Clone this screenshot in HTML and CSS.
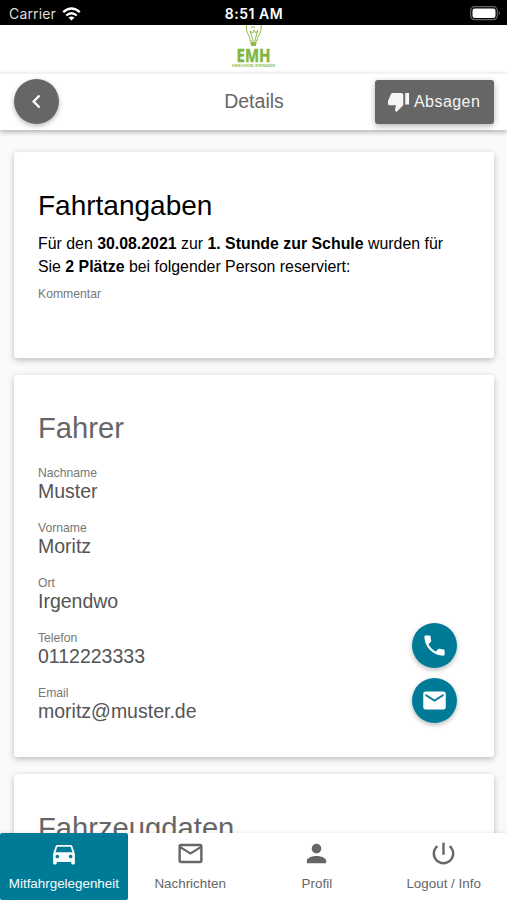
FILE: index.html
```html
<!DOCTYPE html>
<html lang="de">
<head>
<meta charset="utf-8">
<meta name="viewport" content="width=device-width, initial-scale=1">
<title>Details</title>
<link rel="stylesheet" href="styles.css">
</head>
<body>
<div class="app">
  <div class="status">
    <div class="carrier"><span>Carrier</span>
      <svg width="19" height="14" viewBox="0 0 19 14" fill="none" stroke="#fff" stroke-width="2.3"><path class="line" d="M1.2 5.2Q9.5-2.2 17.8 5.2M4.2 8.5Q9.5 3.9 14.8 8.5"/><path d="M9.5 13.6L6.5 10.6Q9.5 8.2 12.5 10.6Z" fill="#fff" stroke="none"/></svg>
    </div>
    <div class="clock">8:51 AM</div>
    <svg class="battery" width="31" height="15" viewBox="0 0 31 15"><rect x=".7" y=".7" width="26.6" height="13" rx="4" fill="#000" stroke="#666" stroke-width="1.2"/><rect x="2.5" y="2.4" width="23" height="9.6" rx="2.3" fill="#fff"/><path d="M28.8 5Q31 7.2 28.8 9.4Z" fill="#777"/></svg>
  </div>
  <div class="brand">
    <svg width="46" height="48" viewBox="0 0 46 48">
      <g class="line" stroke="#8fbd4c" stroke-width="1"><path d="M15.5 0C15 4 16 8 18 11Q19 13 19 16H26Q26 13 27.5 11C30 7 30.5 4 30 0M22 15L19 6L22 8L23 5L25 8L27 5L24 15M20 3Q22 0 24 3"/><path d="M19.5 18H25.5M20 20H25" stroke-width="2"/></g>
      <text x="5.5" y="36.8" textLength="34" lengthAdjust="spacingAndGlyphs" class="brand-name">EMH</text>
      <text x="1" y="42.3" textLength="43" lengthAdjust="spacingAndGlyphs" class="brand-sub">EINFACH MOBIL MITEINANDER</text>
    </svg>
  </div>
  <header class="bar">
    <button class="round back" aria-label="Zurück"><svg width="27" height="27" viewBox="0 0 24 24"><path d="M15.41,16.58L10.83,12L15.41,7.41L14,6L8,12L14,18L15.41,16.58Z"/></svg></button>
    <h1>Details</h1>
    <button class="cancel"><svg width="23" height="23" viewBox="0 0 24 24"><path d="M19,15H23V3H19M15,3H6C5.17,3 4.46,3.5 4.16,4.22L1.14,11.27C1.05,11.5 1,11.74 1,12V14A2,2 0 0,0 3,16H9.31L8.36,20.57C8.34,20.67 8.33,20.77 8.33,20.88C8.33,21.3 8.5,21.67 8.77,21.94L9.83,23L16.41,16.41C16.78,16.05 17,15.55 17,15V5C17,3.89 16.1,3 15,3Z"/></svg><span>Absagen</span></button>
  </header>
  <main>
    <section class="card ride">
      <h2>Fahrtangaben</h2>
      <p>Für den <b>30.08.2021</b> zur <b>1. Stunde zur Schule</b> wurden für<br>Sie <b>2 Plätze</b> bei folgender Person reserviert:</p>
      <div class="label">Kommentar</div>
    </section>
    <section class="card driver">
      <h2>Fahrer</h2>
      <div class="field"><div><div class="label">Nachname</div><div class="value">Muster</div></div></div>
      <div class="field"><div><div class="label">Vorname</div><div class="value">Moritz</div></div></div>
      <div class="field"><div><div class="label">Ort</div><div class="value">Irgendwo</div></div></div>
      <div class="field"><div><div class="label">Telefon</div><div class="value">0112223333</div></div>
        <button class="round action" aria-label="Anrufen"><svg width="27" height="27" viewBox="0 0 24 24"><path d="M6.62,10.79C8.06,13.62 10.38,15.94 13.21,17.38L15.41,15.18C15.69,14.9 16.08,14.82 16.43,14.93C17.55,15.3 18.75,15.5 20,15.5A1,1 0 0,1 21,16.5V20A1,1 0 0,1 20,21A17,17 0 0,1 3,4A1,1 0 0,1 4,3H7.5A1,1 0 0,1 8.5,4C8.5,5.25 8.7,6.45 9.07,7.57C9.18,7.92 9.1,8.31 8.82,8.59L6.62,10.79Z"/></svg></button></div>
      <div class="field"><div><div class="label">Email</div><div class="value">moritz@muster.de</div></div>
        <button class="round action" aria-label="E-Mail"><svg width="27" height="27" viewBox="0 0 24 24"><path d="M20,8L12,13L4,8V6L12,11L20,6M20,4H4C2.89,4 2,4.89 2,6V18A2,2 0 0,0 4,20H20A2,2 0 0,0 22,18V6C22,4.89 21.1,4 20,4Z"/></svg></button></div>
    </section>
    <section class="card vehicle"><h2>Fahrzeugdaten</h2></section>
  </main>
  <nav>
    <a class="tab active"><svg width="30" height="29" viewBox="0 0 24 24"><path d="M18.92 6.01C18.72 5.42 18.16 5 17.5 5h-11c-.66 0-1.21.42-1.42 1.01L3 12v8c0 .55.45 1 1 1h1c.55 0 1-.45 1-1v-1h12v1c0 .55.45 1 1 1h1c.55 0 1-.45 1-1v-8l-2.08-5.99zM6.5 16c-.83 0-1.5-.67-1.5-1.5S5.67 13 6.5 13s1.5.67 1.5 1.5S7.33 16 6.5 16zm11 0c-.83 0-1.5-.67-1.5-1.5s.67-1.5 1.5-1.5 1.5.67 1.5 1.5-.67 1.5-1.5 1.5zM5 11l1.5-4.5h11L19 11H5z"/></svg><span>Mitfahrgelegenheit</span></a>
    <a class="tab"><svg width="29" height="29" viewBox="0 0 24 24"><path d="M22 6C22 4.9 21.1 4 20 4H4C2.9 4 2 4.9 2 6V18C2 19.1 2.9 20 4 20H20C21.1 20 22 19.1 22 18V6M20 6L12 11L4 6H20M20 18H4V8L12 13L20 8V18Z"/></svg><span>Nachrichten</span></a>
    <a class="tab"><svg width="29" height="29" viewBox="0 0 24 24"><path d="M12,4A4,4 0 0,1 16,8A4,4 0 0,1 12,12A4,4 0 0,1 8,8A4,4 0 0,1 12,4M12,14C16.42,14 20,15.79 20,18V20H4V18C4,15.79 7.58,14 12,14Z"/></svg><span>Profil</span></a>
    <a class="tab"><svg width="29" height="29" viewBox="0 0 24 24"><path d="M13 3h-2v10h2V3zm4.83 2.17l-1.42 1.42C17.99 7.86 19 9.81 19 12c0 3.87-3.13 7-7 7s-7-3.13-7-7c0-2.19 1.01-4.14 2.58-5.42L6.17 5.17C4.23 6.82 3 9.26 3 12c0 4.97 4.03 9 9 9s9-4.03 9-9c0-2.74-1.23-5.18-3.17-6.83z"/></svg><span>Logout / Info</span></a>
  </nav>
</div>
</body>
</html>
```
FILE: styles.css
```css
* { box-sizing: border-box; }
body { margin: 0; font-family: "Liberation Sans", Arial, sans-serif; background: #fafafa; color: #666; }
h1, h2, p { margin: 0; font-weight: 400; }
button { border: 0; padding: 0; font: inherit; color: #fff; }
svg { display: block; flex: none; fill: currentColor; }
.line { fill: none; }
.app { height: 900px; display: flex; flex-direction: column; overflow: hidden; }
.status { height: 25px; flex: none; background: #000; color: #fff; display: grid; grid-template-columns: 1fr auto 1fr; align-items: center; padding: 2px 6px 0 9px; font-family: Inter, sans-serif; font-size: 14px; }
.carrier { display: flex; align-items: center; gap: 6px; color: #ddd; letter-spacing: .15px; }
.clock { font-weight: 600; font-size: 14px; letter-spacing: .5px; margin-left: -2px; }
.battery { justify-self: end; }
.brand { height: 48px; flex: none; background: #fff; display: flex; justify-content: center; }
.brand-name { font: 700 18px "Noto Sans", sans-serif; fill: #82b83a; stroke: #82b83a; stroke-width: .5px; }
.brand-sub { font: 700 3.5px "Liberation Sans", sans-serif; fill: #8fbd4c; }
.bar { height: 57px; flex: none; background: #fff; border-top: 1px solid #f2f2f2; box-shadow: 0 2px 5px rgba(0,0,0,.3); display: grid; grid-template-columns: 1fr auto 1fr; align-items: center; padding: 0 13px 1px 14px; position: relative; z-index: 1; }
.bar h1 { font-size: 19.5px; line-height: 22px; padding-bottom: 1px; }
.round { width: 45px; height: 45px; border-radius: 50%; display: flex; align-items: center; justify-content: center; box-shadow: 0 2px 5px rgba(0,0,0,.28); }
.back { background: #666; }
.action { background: #007b97; }
.cancel { justify-self: end; width: 119px; height: 44px; border-radius: 3px; background: #666; box-shadow: 0 2px 6px rgba(0,0,0,.3); display: flex; align-items: center; gap: 4px; padding-left: 12px; font-size: 16px; letter-spacing: .45px; color: #f5f5f5; }
main { flex: 1; min-height: 0; overflow: hidden; padding: 22px 13px 0 14px; display: flex; flex-direction: column; gap: 17px; }
.card { flex: none; background: #fff; border-radius: 3px; padding: 0 24px; box-shadow: 0 2px 6px rgba(0,0,0,.25); }
.ride { height: 206px; padding-top: 38px; color: #000; }
.driver { height: 382px; padding: 37px 37px 0 24px; }
.vehicle { height: 200px; padding-top: 38px; }
.card h2 { font-size: 29.2px; line-height: 32px; }
.ride h2 { font-size: 28px; }
.ride p { margin-top: 10px; font-size: 15.88px; line-height: 23.4px; white-space: nowrap; }
.label { font-size: 12.2px; line-height: 14px; color: #777; }
.ride .label { margin-top: 8px; }
.driver h2 { margin-bottom: 22px; }
.field { height: 55px; display: flex; justify-content: space-between; align-items: flex-start; }
.field > .action { margin-top: -8px; }
.value { font-size: 19.5px; line-height: 22px; color: #555; }
nav { height: 67px; flex: none; background: #fff; display: grid; grid-template-columns: repeat(4, 1fr); position: relative; z-index: 1; box-shadow: 0 -1px 4px rgba(0,0,0,.08); }
.tab { display: flex; flex-direction: column; align-items: center; padding-top: 6px; gap: 8px; font-size: 13.4px; line-height: 15px; white-space: nowrap; }
.active { background: #007b97; color: #f8fcfd; border-radius: 2px; margin-right: -1px; }
```
